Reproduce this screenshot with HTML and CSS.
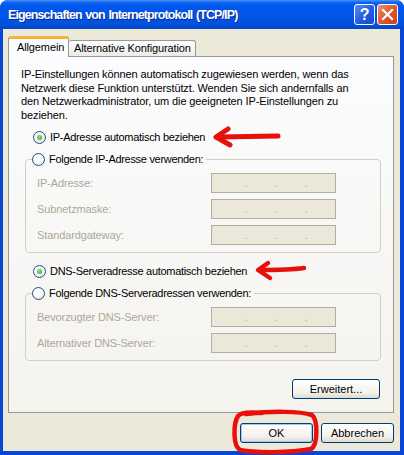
FILE: index.html
```html
<!DOCTYPE html>
<html lang="de">
<head>
    <meta charset="UTF-8">
    <title>Eigenschaften von Internetprotokoll (TCP/IP)</title>
    <link rel="stylesheet" href="styles.css">
</head>
<body>
    <div class="window">
        <div class="titlebar">
            <span class="title">Eigenschaften von Internetprotokoll (TCP/IP)</span>
            <span class="cap-btn help">?</span>
            <span class="cap-btn close">
                <svg width="19" height="19" viewBox="0 0 19 19"><path d="M5 5 L14 14 M14 5 L5 14" stroke="#fff" stroke-width="2.2" stroke-linecap="square"/></svg>
            </span>
        </div>
        <div class="client">
            <div class="tabs">
                <div class="tab active">Allgemein</div>
                <div class="tab">Alternative Konfiguration</div>
            </div>
            <div class="panel">
                <p class="intro">IP-Einstellungen können automatisch zugewiesen werden, wenn das<br>Netzwerk diese Funktion unterstützt. Wenden Sie sich andernfalls an<br>den Netzwerkadministrator, um die geeigneten IP-Einstellungen zu<br>beziehen.</p>

                <div class="option first"><span class="radio checked"></span>IP-Adresse automatisch beziehen</div>
                <fieldset class="group">
                    <legend class="option"><span class="radio"></span>Folgende IP-Adresse verwenden:</legend>
                    <div class="field"><span>IP-Adresse:</span><span class="ipbox"><i>.</i><i>.</i><i>.</i></span></div>
                    <div class="field"><span>Subnetzmaske:</span><span class="ipbox"><i>.</i><i>.</i><i>.</i></span></div>
                    <div class="field"><span>Standardgateway:</span><span class="ipbox"><i>.</i><i>.</i><i>.</i></span></div>
                </fieldset>

                <div class="option second"><span class="radio checked"></span>DNS-Serveradresse automatisch beziehen</div>
                <fieldset class="group dns">
                    <legend class="option"><span class="radio"></span>Folgende DNS-Serveradressen verwenden:</legend>
                    <div class="field"><span>Bevorzugter DNS-Server:</span><span class="ipbox"><i>.</i><i>.</i><i>.</i></span></div>
                    <div class="field"><span>Alternativer DNS-Server:</span><span class="ipbox"><i>.</i><i>.</i><i>.</i></span></div>
                </fieldset>

                <div class="panel-actions">
                    <button class="btn wide">Erweitert...</button>
                </div>
            </div>
            <div class="dialog-actions">
                <button class="btn default">OK</button>
                <button class="btn">Abbrechen</button>
            </div>
        </div>

        <!-- red hand-drawn marks on top of the screenshot -->
        <svg class="marks" width="404" height="455" viewBox="0 0 404 455">
            <g fill="none" stroke="#e8100c" stroke-linecap="round" stroke-linejoin="round">
                <path d="M218 137 L278 136" stroke-width="5"/>
                <path d="M228 129 L216 137 L230 145" stroke-width="5"/>
                <path d="M259 270 C 275 270, 290 270, 304 268" stroke-width="4.5"/>
                <path d="M268 263 L258 270 L270 278" stroke-width="4.5"/>
                <path d="M246 414 C 270 411, 300 411, 312 415 C 318 420, 318 445, 311 449 C 290 453, 255 453, 240 450 C 233 446, 233 424, 238 416 C 241 412, 252 412, 262 413" stroke-width="4.5"/>
            </g>
        </svg>
    </div>
</body>
</html>
```

FILE: styles.css
```css
* {
    box-sizing: border-box;
}
body {
    margin: 0;
    background: #fff;
    font-family: "Liberation Sans", Arial, sans-serif;
    font-size: 11px;
    letter-spacing: -0.12px;
    color: #000;
}
.window {
    position: relative;
    width: 404px;
    height: 455px;
    display: flex;
    flex-direction: column;
    background: #0846d6;
    border-radius: 8px 8px 0 0;
    overflow: hidden;
}
.titlebar {
    height: 29px;
    display: flex;
    align-items: center;
    gap: 2px;
    padding: 0 6px 0 8px;
    background: linear-gradient(#4a94fb 0%, #1066ee 8%, #0058ee 18%, #0055e8 55%, #0350dc 85%, #0246c4 100%);
}
.title {
    flex: 1;
    color: #fff;
    font-weight: bold;
    font-size: 12.5px;
    letter-spacing: -0.9px;
    word-spacing: 1px;
    text-shadow: 1px 1px #0b2a8e;
}
.cap-btn {
    width: 21px;
    height: 21px;
    border: 1px solid #fff;
    border-radius: 3px;
    display: flex;
    align-items: center;
    justify-content: center;
    color: #fff;
}
.help {
    background: linear-gradient(135deg, #5b8ff7, #2258e4 55%, #1a4bd0);
    font-weight: bold;
    font-size: 16px;
}
.close {
    background: linear-gradient(135deg, #f0906c, #e0582c 50%, #c8401a);
}
.client {
    flex: 1;
    margin: 0 4px 4px 3px;
    padding: 7px 6px 0 5px;
    background: #ece9d8;
}
.tabs {
    display: flex;
    align-items: flex-end;
    height: 20px;
}
.tab {
    height: 16px;
    padding: 0 4px 0 5px;
    border: 1px solid #919b9c;
    border-bottom: none;
    border-left: none;
    border-radius: 3px 3px 0 0;
    background: linear-gradient(#fff, #ecebe6);
    line-height: 15px;
}
.tab.active {
    position: relative;
    z-index: 1;
    height: 21px;
    margin-bottom: -1px;
    width: 61px;
    padding-left: 8px;
    border-left: 1px solid #919b9c;
    border-top: 3px solid #f4b23c;
    background: #fcfcfe;
    line-height: 17px;
}
.panel {
    height: 357px;
    padding: 11px 12px 0;
    border: 1px solid #919b9c;
    background: linear-gradient(#fcfcfe, #f4f3ee);
}
.intro {
    margin: 0;
    line-height: 13.5px;
}
.option {
    display: flex;
    align-items: center;
    gap: 4px;
    height: 16px;
    letter-spacing: -0.3px;
}
.option.first {
    margin: 7px 0 6px 12px;
}
.option.second {
    margin: 10px 0 6px 12px;
}
.radio {
    width: 13px;
    height: 13px;
    border: 1px solid #1c5180;
    border-radius: 50%;
    background: radial-gradient(circle at 40% 40%, #fff 30%, #e3e2da);
    display: flex;
    align-items: center;
    justify-content: center;
}
.radio.checked::after {
    content: '';
    width: 5px;
    height: 5px;
    border-radius: 50%;
    background: radial-gradient(circle at 40% 40%, #8ae38a, #21a121);
}
.group {
    margin: 0 0 0 4px;
    padding: 0 0 7px;
    border: 1px solid #d0d0bf;
    border-radius: 4px;
}
.group legend {
    margin-left: 6px;
    padding: 0 3px 0 0;
}
.field {
    display: grid;
    grid-template-columns: 174px 125px;
    align-items: center;
    margin: 6px 0 0 11px;
    color: #aca899;
}
.ipbox {
    height: 20px;
    display: grid;
    grid-template-columns: repeat(3, 30px);
    align-items: end;
    padding: 0 0 3px 19px;
    border: 1px solid #b0aea4;
    background: #ebe8d9;
}
.ipbox i {
    font-style: normal;
    text-align: center;
    line-height: 11px;
}
.panel-actions {
    display: flex;
    justify-content: flex-end;
    margin: 18px 1px 0 0;
}
.btn {
    height: 20px;
    padding: 0;
    font: inherit;
    border: 1px solid #003c74;
    border-radius: 3px;
    background: linear-gradient(#fff, #f2f1ea 70%, #dedbcd);
    color: #000;
}
.btn.wide {
    width: 88px;
}
.dialog-actions {
    display: flex;
    justify-content: flex-end;
    gap: 8px;
    margin-top: 10px;
}
.dialog-actions .btn {
    width: 73px;
}
.btn.default {
    box-shadow: inset 0 0 0 1px #a9c3f4;
}
.marks {
    position: absolute;
    top: 0;
    left: 0;
    pointer-events: none;
}
```
